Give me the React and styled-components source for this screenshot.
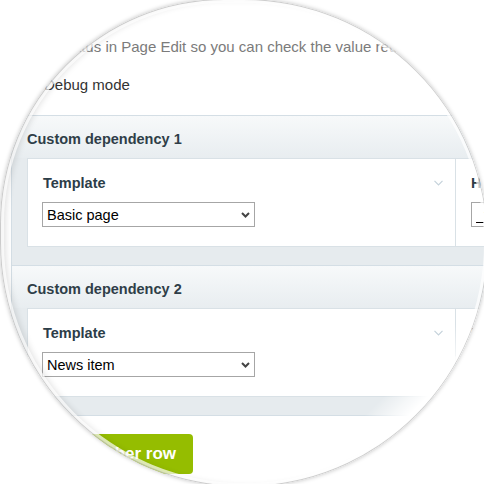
import React from "react";
import styled, { createGlobalStyle } from "styled-components";

const GlobalStyle = createGlobalStyle`
  html, body {
    margin: 0;
    padding: 0;
    background: #fff;
    overflow: hidden;
  }
  body {
    font-family: "Liberation Sans", Arial, sans-serif;
  }
`;

const Stage = styled.div`
  width: 484px;
  height: 484px;
  overflow: hidden;
  background: #fff;
`;

const Lens = styled.div`
  position: relative;
  width: 488px;
  height: 488px;
  margin-top: -1px;
  border-radius: 46% 50% 50% 50%;
  overflow: hidden;
  background: #fff;
  box-shadow: 0 0 4px rgba(0, 0, 0, 0.25);
  &::after {
    content: "";
    position: absolute;
    inset: 0;
    border-radius: inherit;
    pointer-events: none;
    background: linear-gradient(
      135deg,
      rgba(255, 255, 255, 0) 80%,
      #fff 84.6%
    );
    box-shadow: inset 0 0 0 1px rgba(150, 150, 150, 0.45),
      inset 0 0 0 4px rgba(255, 255, 255, 0.7),
      inset 5px 0 7px rgba(0, 0, 0, 0.14);
  }
`;

const Page = styled.div`
  width: 760px;
  box-sizing: border-box;
  padding: 39px 0 0 11px;
`;

const Description = styled.p`
  margin: 0 0 19px 1px;
  font-size: 15px;
  line-height: 18px;
  color: #7b7b7b;
  white-space: nowrap;
`;

const CheckRow = styled.label`
  display: flex;
  align-items: center;
  gap: 7px;
  height: 18px;
  padding-left: 13px;
  margin-bottom: 22px;
  font-size: 15px;
  color: #333;
  input {
    width: 13px;
    height: 13px;
    margin: 0;
  }
`;

const Panels = styled.div`
  border-bottom: 1px solid #d4dee5;
`;

const Panel = styled.div`
  border-top: 1px solid #d4dee5;
  border-left: 1px solid #d4dee5;
  background: #e6ebee;
`;

const PanelHeader = styled.div`
  padding: 14px 0 10px 15px;
  font-size: 14.5px;
  line-height: 18px;
  font-weight: bold;
  color: #2f3e48;
  background: linear-gradient(#f7f9fa, #e8edf0);
`;

const PanelBody = styled.div`
  padding: 0 0 18px 15px;
`;

const FieldRow = styled.div`
  display: flex;
  background: #fff;
  border: 1px solid #d9e1e6;
`;

const Cell = styled.div`
  box-sizing: border-box;
  width: ${(p) => p.$w};
  padding: 15px 12px 19px 15px;
  border-right: 1px solid #d9e1e6;
`;

const LabelRow = styled.div`
  display: flex;
  align-items: center;
  justify-content: space-between;
  height: 18px;
  margin-bottom: 10px;
`;

const Label = styled.span`
  font-size: 14.5px;
  font-weight: bold;
  color: #2c3d48;
`;

const SelectWrap = styled.div`
  position: relative;
  width: 213px;
  height: 25px;
  margin-left: -1px;
  svg {
    position: absolute;
    right: 5px;
    top: 10px;
    pointer-events: none;
  }
`;

const Select = styled.select`
  display: block;
  box-sizing: border-box;
  width: 100%;
  height: 25px;
  margin: 0;
  padding: 0 18px 0 4px;
  border: 1px solid #a6a6a6;
  border-radius: 0;
  appearance: none;
  background: #fff;
  color: #000;
  font-family: "Liberation Sans", Arial, sans-serif;
  font-size: 14.5px;
`;

const TextInput = styled.input`
  display: block;
  box-sizing: border-box;
  width: 200px;
  height: 25px;
  margin: 0;
  padding: 0 4px;
  border: 1px solid #a6a6a6;
  color: #000;
  font-family: "Liberation Sans", Arial, sans-serif;
  font-size: 14.5px;
`;

const AddButton = styled.button`
  display: block;
  height: 40px;
  margin: 18px 0 0 13px;
  padding: 0 17px;
  border: none;
  border-radius: 4px;
  background: #95bd00;
  color: #fff;
  font-family: "Liberation Sans", Arial, sans-serif;
  font-size: 17px;
  font-weight: bold;
`;

const Toggle = () => (
  <svg width="9" height="6" viewBox="0 0 9 6">
    <polyline
      points="0.5,0.8 4.5,4.8 8.5,0.8"
      fill="none"
      stroke="#c5d2db"
      strokeWidth="1.2"
    />
  </svg>
);

const Arrow = () => (
  <svg width="9" height="6" viewBox="0 0 9 6">
    <polyline
      points="1,1 4.5,4.5 8,1"
      fill="none"
      stroke="#444"
      strokeWidth="2"
    />
  </svg>
);

const rows = [
  { title: "Custom dependency 1", template: "Basic page" },
  { title: "Custom dependency 2", template: "News item" },
];

export default function App() {
  return (
    <Stage>
      <GlobalStyle />
      <Lens>
        <Page>
          <Description>
            Shows status in Page Edit so you can check the value returned by
            the selector.
          </Description>
          <CheckRow>
            <input type="checkbox" />
            Debug mode
          </CheckRow>
          <Panels>
            {rows.map((row) => (
              <Panel key={row.title}>
                <PanelHeader>{row.title}</PanelHeader>
                <PanelBody>
                  <FieldRow>
                    <Cell $w="428px">
                      <LabelRow>
                        <Label>Template</Label>
                        <Toggle />
                      </LabelRow>
                      <SelectWrap>
                        <Select defaultValue={row.template}>
                          <option>Basic page</option>
                          <option>News item</option>
                        </Select>
                        <Arrow />
                      </SelectWrap>
                    </Cell>
                    <Cell $w="260px">
                      <LabelRow>
                        <Label>Hook</Label>
                      </LabelRow>
                      <TextInput defaultValue="_field" />
                    </Cell>
                  </FieldRow>
                </PanelBody>
              </Panel>
            ))}
          </Panels>
          <AddButton>Add another row</AddButton>
        </Page>
      </Lens>
    </Stage>
  );
}
